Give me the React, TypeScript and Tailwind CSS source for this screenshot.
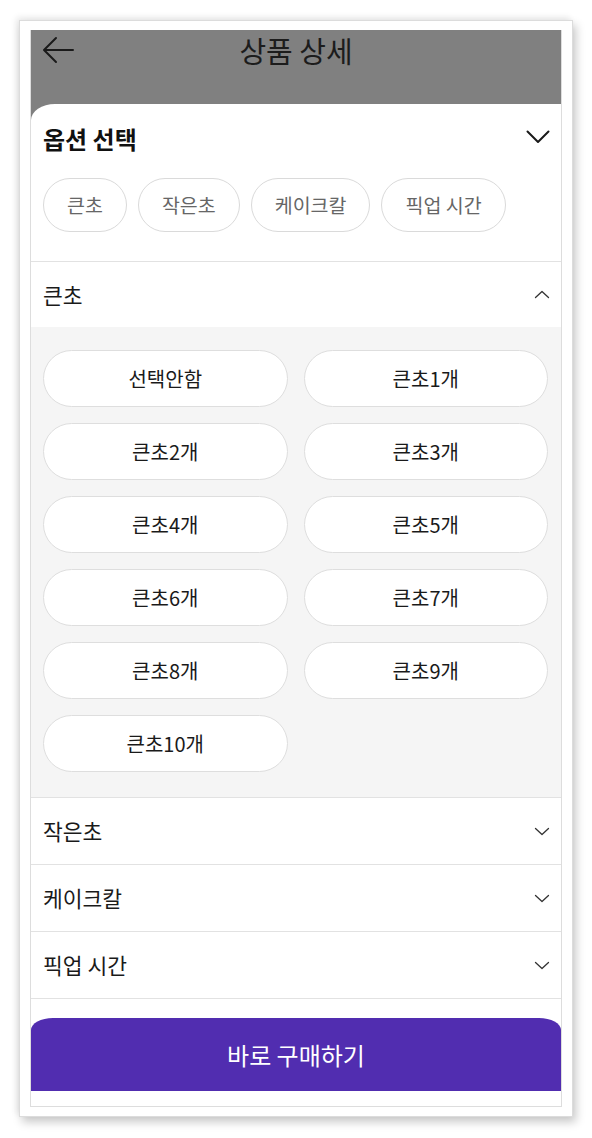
import React from "react";

const counts = [
  "선택안함",
  "큰초1개",
  "큰초2개",
  "큰초3개",
  "큰초4개",
  "큰초5개",
  "큰초6개",
  "큰초7개",
  "큰초8개",
  "큰초9개",
  "큰초10개",
];

const chips = ["큰초", "작은초", "케이크칼", "픽업 시간"];

const ChevronSmall: React.FC<{ up?: boolean }> = ({ up }) => (
  <svg width="16" height="9" viewBox="0 0 16 9" fill="none" className="shrink-0">
    <path
      d={up ? "M1.5 7.5 8 1.5l6.5 6" : "M1.5 1.5 8 7.5l6.5-6"}
      stroke="#333"
      strokeWidth="1.3"
      strokeLinecap="round"
      strokeLinejoin="round"
    />
  </svg>
);

const App: React.FC = () => {
  return (
    <div className="min-h-screen bg-white pt-[20px] pl-[19px] font-['Noto_Sans_CJK_KR','Noto_Sans',sans-serif]">
      <div className="w-[554px] border border-[#dcdcdc] bg-white px-[10px] py-[9px] shadow-[3px_5px_9px_rgba(0,0,0,0.22),-3px_-3px_6px_rgba(0,0,0,0.08)]">
        <div className="border-x border-b border-[#dddddd] bg-[#808080]">
          {/* header */}
          <div className="relative h-[74px]">
            <svg
              className="absolute left-[11px] top-[6px]"
              width="32"
              height="28"
              viewBox="0 0 32 28"
              fill="none"
            >
              <path
                d="M31 14H2.5M14 2 2 14l12 12"
                stroke="#1a1a1a"
                strokeWidth="2"
                strokeLinecap="round"
                strokeLinejoin="round"
              />
            </svg>
            <div className="flex h-[40px] items-center justify-center text-[29px] leading-none text-[#1c1c1c]">
              상품 상세
            </div>
          </div>

          {/* white panel */}
          <div className="rounded-tl-[24px_16px] bg-white">
            <div className="border-b border-[#e2e2e2] pt-[20px] pb-[29px]">
              <div className="flex h-[30px] items-center justify-between pl-[12px] pr-[11px]">
                <span className="text-[24px] font-bold leading-none text-[#111]">옵션 선택</span>
                <svg width="24" height="14" viewBox="0 0 24 14" fill="none" className="-mt-[4px]">
                  <path
                    d="M1.5 1.5 12 12 22.5 1.5"
                    stroke="#1a1a1a"
                    strokeWidth="2"
                    strokeLinecap="round"
                    strokeLinejoin="round"
                  />
                </svg>
              </div>
              <div className="mt-[24px] flex gap-[11px] pl-[12px]">
                {chips.map((c) => (
                  <div
                    key={c}
                    className="flex h-[54px] items-center rounded-full border border-[#dadada] px-[23px] text-[19.5px] leading-none text-[#666]"
                  >
                    {c}
                  </div>
                ))}
              </div>
            </div>

            <div className="flex h-[65px] items-center justify-between pl-[12px] pr-[11px]">
              <span className="text-[21.5px] leading-none text-[#1a1a1a]">큰초</span>
              <ChevronSmall up />
            </div>

            <div className="grid grid-cols-2 gap-x-[16px] gap-y-[16px] border-b border-[#e2e2e2] bg-[#f5f5f5] pt-[23px] pb-[25px] pl-[12px] pr-[13px]">
              {counts.map((c) => (
                <div
                  key={c}
                  className="flex h-[57px] items-center justify-center rounded-full border border-[#dedede] bg-white text-[20px] leading-none text-[#1a1a1a]"
                >
                  {c}
                </div>
              ))}
            </div>

            {["작은초", "케이크칼", "픽업 시간"].map((t) => (
              <div
                key={t}
                className="flex h-[67px] items-center justify-between border-b border-[#e2e2e2] pl-[12px] pr-[11px]"
              >
                <span className="text-[21.5px] leading-none text-[#1a1a1a]">{t}</span>
                <ChevronSmall />
              </div>
            ))}

            <div className="pt-[19px] pb-[15px]">
              <div className="flex h-[73px] items-center justify-center rounded-tl-[22px_12px] rounded-tr-[22px_12px] bg-[#512db0] text-[24px] leading-none text-white">
                바로 구매하기
              </div>
            </div>
          </div>
        </div>
      </div>
    </div>
  );
};

export default App;
